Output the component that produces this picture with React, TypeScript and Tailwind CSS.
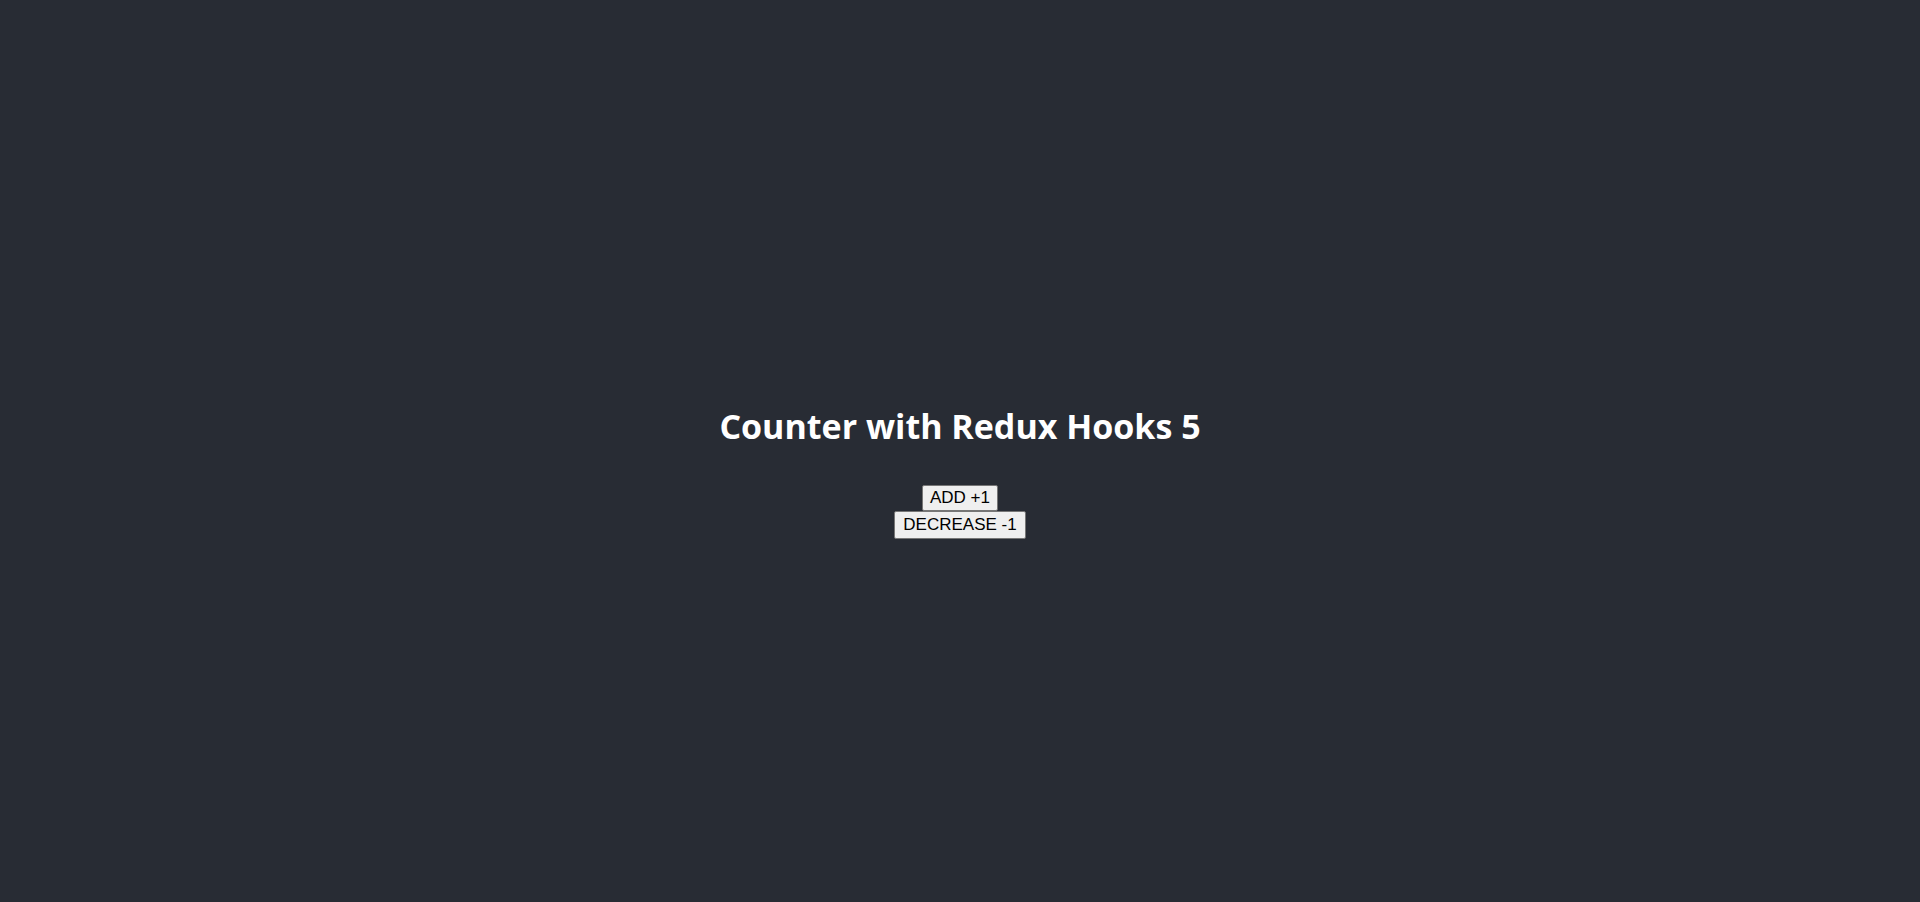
export default function App() {
  return (
    <div className="min-h-[902px] w-full bg-[#282c34] flex flex-col items-center">
      <div className="h-[405px]" />
      <h1 className="text-[34px] leading-[43px] font-bold text-white" style={{ fontFamily: '"Open Sans", sans-serif' }}>
        Counter with Redux Hooks 5
      </h1>
      <div className="h-[37px]" />
      <button className="h-[26px] px-[7px] bg-[#efefef] border border-[#767676] rounded-[2px] text-[17px] leading-[20px] text-black" style={{ fontFamily: '"Liberation Sans", Arial, sans-serif' }}>
        ADD +1
      </button>
      <button className="h-[28px] px-[8px] bg-[#efefef] border border-[#767676] rounded-[2px] text-[17px] leading-[20px] text-black" style={{ fontFamily: '"Liberation Sans", Arial, sans-serif' }}>
        DECREASE -1
      </button>
    </div>
  );
}
